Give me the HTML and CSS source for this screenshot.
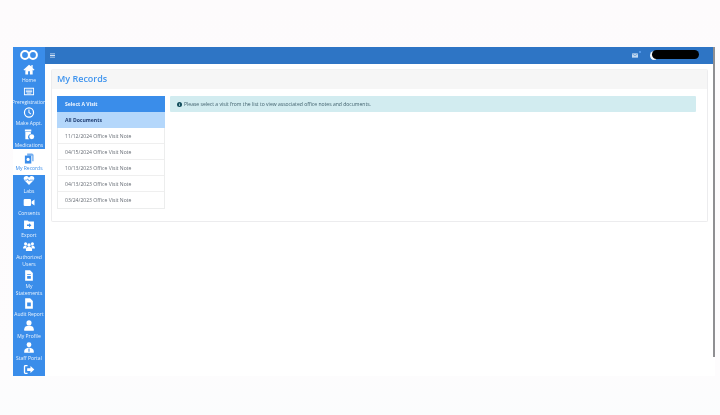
FILE: index.html
```html
<!DOCTYPE html>
<html lang="en">
<head>
<meta charset="utf-8">
<title>My Records</title>
<link rel="stylesheet" href="styles.css">
</head>
<body>
<div class="window">
  <nav class="sidebar">
    <div class="logo">
      <svg viewBox="0 0 18 12" width="18" height="12"><circle cx="5" cy="6" r="3.9" class="ring"/><circle cx="13" cy="6" r="3.9" class="ring"/></svg>
    </div>
    <a class="nav-item">
      <svg class="ico" viewBox="0 0 12 12"><path d="M6 .8 0 6.2l.9 1L2 6.2V11.4h3V8h2v3.4h3V6.2l1.1 1 .9-1-2-1.8V1.2H8.6v1.6z"/></svg>
      <span>Home</span>
    </a>
    <a class="nav-item">
      <svg class="ico" viewBox="0 0 12 12"><path fill-rule="evenodd" d="M.5 2h11v8H.5zM1.5 3v6h9V3z"/><path d="M2.5 4h7v1h-7zM2.5 5.7h7v1h-7zM3.5 7.4h5v.8h-5z"/></svg>
      <span class="wide">Preregistration</span>
    </a>
    <a class="nav-item">
      <svg class="ico" viewBox="0 0 12 12"><path fill-rule="evenodd" d="M6 .4a5.600 5.600 0 1 1 0 11.200A5.600 5.600 0 0 1 6 .4zm0 1.300a4.300 4.300 0 1 0 0 8.600 4.300 4.300 0 0 0 0-8.600z"/><path d="M5.400 2.800h1.100v3l2 1.500-.6.9-2.500-1.800z"/></svg>
      <span>Make Appt.</span>
    </a>
    <a class="nav-item">
      <svg class="ico" viewBox="0 0 12 12"><path d="M1.500.6h7v2h-7zM2 3.200h6v2.200a3.400 3.400 0 0 0-2 5.900H2z"/><circle cx="9" cy="8.400" r="2.700"/></svg>
      <span>Medications</span>
    </a>
    <a class="nav-item active">
      <svg class="ico" viewBox="0 0 12 12"><path d="M4 .5h5.500L11 2v7H9.500V3H4z" opacity=".7"/><path d="M1.500 2.800h7v8.700h-7z"/><circle cx="5" cy="7" r="1.700" fill="#fff"/></svg>
      <span>My Records</span>
    </a>
    <a class="nav-item">
      <svg class="ico" viewBox="0 0 12 12"><path d="M6 11 .9 5.800C-.6 4 .5 1.200 3 1.200c1.300 0 2.300.7 3 1.700.7-1 1.700-1.700 3-1.700 2.500 0 3.600 2.800 2.100 4.600z"/><path d="M1 5.600h2.600l1-1.400 1.500 2.500 1-1.100H11" class="cut"/></svg>
      <span>Labs</span>
    </a>
    <a class="nav-item">
      <svg class="ico" viewBox="0 0 12 12"><rect x=".2" y="2.200" width="8" height="7.600" rx="1.200"/><path d="m8.800 5 3.200-2.200v6.400L8.800 7z"/></svg>
      <span>Consents</span>
    </a>
    <a class="nav-item">
      <svg class="ico" viewBox="0 0 12 12"><path fill-rule="evenodd" d="M.6 1.600h4l1.200 1.200h5.600v8H.6zM6 4.600v1.500H3.800v1.600H6v1.500l2.600-2.300z"/></svg>
      <span>Export</span>
    </a>
    <a class="nav-item double">
      <svg class="ico" viewBox="0 0 14 12"><circle cx="3" cy="2.800" r="1.800"/><circle cx="11" cy="2.800" r="1.800"/><circle cx="7" cy="4.200" r="2"/><path d="M0 8.400c0-2 1-3.600 3-3.600.6 0 1 .1 1.400.4-.4.6-.6 1.800-.6 3.200zM14 8.400c0-2-1-3.600-3-3.600-.6 0-1 .1-1.400.4.4.6.6 1.800.6 3.200zM3.400 11.200V9.400c0-2 1.400-3 3.600-3s3.600 1 3.600 3v1.800z"/></svg>
      <span>Authorized<br>Users</span>
    </a>
    <a class="nav-item double">
      <svg class="ico" viewBox="0 0 12 12"><path fill-rule="evenodd" d="M1.800.4h5.400l3 3v8.200H1.800zM4 4.500v1h4v-1zM4 6.500v3h4v-3z"/></svg>
      <span>My<br>Statements</span>
    </a>
    <a class="nav-item">
      <svg class="ico" viewBox="0 0 12 12"><path fill-rule="evenodd" d="M1.800.4h5.400l3 3v8.200H1.800zM4 5v4h4V5z"/></svg>
      <span>Audit Report</span>
    </a>
    <a class="nav-item">
      <svg class="ico" viewBox="0 0 12 12"><circle cx="6" cy="3.200" r="2.800"/><path d="M.8 11.600V10c0-2.300 2-3.600 5.200-3.600s5.200 1.300 5.200 3.600v1.600z"/></svg>
      <span>My Profile</span>
    </a>
    <a class="nav-item">
      <svg class="ico" viewBox="0 0 12 12"><circle cx="6" cy="3" r="2.600"/><path fill-rule="evenodd" d="M.8 11.600V9.800C.8 7.600 3 6.200 6 6.200s5.200 1.400 5.200 3.600v1.800zM5.400 7v3.600h1.200V7z"/></svg>
      <span>Staff Portal</span>
    </a>
    <a class="nav-item logout">
      <svg class="ico" viewBox="0 0 12 12"><path d="M4.400 1H2C1 1 .4 1.600.4 2.600v6.800c0 1 .6 1.600 1.600 1.600h2.400V9.600H2.400a.6.6 0 0 1-.6-.6V3c0-.3.3-.6.6-.6h2z"/><path d="M7.600 2.200 11.800 6 7.600 9.800V7.500H4V4.500h3.600z"/></svg>
    </a>
  </nav>
  <div class="content">
    <header class="topbar">
      <svg class="menu" viewBox="0 0 6 6" width="5" height="5"><path d="M0 .6h6v1H0zM0 2.500h6v1H0zM0 4.400h6v1H0z"/></svg>
      <div class="topbar-right">
        <span class="mail">
          <svg viewBox="0 0 7 5" width="6" height="5"><path d="M0 0h7v5H0z"/><path d="m.4.6 3.100 2.200L6.600.6" class="mail-line"/></svg>
          <i class="mail-dot"></i>
        </span>
        <span class="avatar"><i class="redaction"></i></span>
      </div>
    </header>
    <main class="main">
      <section class="card">
        <h1 class="card-title">My Records</h1>
        <div class="card-body">
          <div class="visits">
            <div class="visit-head">Select A Visit</div>
            <div class="visit-all">All Documents</div>
            <div class="visit">11/12/2024 Office Visit Note</div>
            <div class="visit">04/15/2024 Office Visit Note</div>
            <div class="visit">10/13/2023 Office Visit Note</div>
            <div class="visit">04/13/2023 Office Visit Note</div>
            <div class="visit">03/24/2023 Office Visit Note</div>
          </div>
          <div class="detail">
            <div class="alert">
              <svg viewBox="0 0 6 6" width="5" height="5"><circle cx="3" cy="3" r="3"/><path d="M2.600 1.100h.8v.8h-.8zM2.600 2.500h.8v2.400h-.8z" class="info"/></svg>
              <span>Please select a visit from the list to view associated office notes and documents.</span>
            </div>
          </div>
        </div>
      </section>
    </main>
  </div>
  <div class="scrollbar"><i class="thumb"></i></div>
</div>
</body>
</html>
```
FILE: styles.css
```css
* { box-sizing: border-box; }
html, body { margin: 0; height: 100%; }
body {
  background: linear-gradient(#fdfbfc, #fdfcfd 90%, #fbfcfd);
  padding: 47px 5px 39px 13px;
  font-family: "Open Sans", "Liberation Sans", sans-serif;
  overflow: hidden;
}
.window {
  display: flex;
  height: 329px;
  background: #fff;
  filter: blur(0.45px);
}
.sidebar {
  width: 32px;
  flex: none;
  background: #3a8dea;
  display: flex;
  flex-direction: column;
  overflow: hidden;
}
.logo { height: 16.3px; flex: none; display: flex; justify-content: center; align-items: flex-start; padding-top: 2px; }
.ring { fill: none; stroke: #fff; stroke-width: 2; }
.nav-item {
  height: 21.7px;
  flex: none;
  display: flex;
  flex-direction: column;
  align-items: center;
  justify-content: flex-end;
  color: #e8f2fd;
  font-size: 5px;
  line-height: 7px;
  text-align: center;
  white-space: nowrap;
  padding-bottom: 1px;
}
.nav-item .ico { width: 12px; height: 11px; fill: #fff; margin-bottom: 2px; flex: none; }
.nav-item.double { height: 29px; }
.nav-item.active { height: 25.5px; margin-top: -1px; padding-bottom: 2.5px; background: #fff; color: #3a8dea; }
.nav-item.active .ico { fill: #3a8dea; margin-bottom: 1px; }
.nav-item.logout { height: 17px; padding-bottom: 5px; }
.nav-item.logout .ico { margin-bottom: 0; }
.wide { font-size: 4.9px; margin: 0 -2px; }
.cut { fill: none; stroke: #3a8dea; stroke-width: .8; }
.content { flex: 1; min-width: 0; display: flex; flex-direction: column; }
.topbar {
  height: 16.5px;
  flex: none;
  background: #2e75c5;
  display: flex;
  justify-content: space-between;
  align-items: center;
  padding: 0 14px 0 5px;
}
.menu { fill: #d5e4f5; }
.topbar-right { display: flex; align-items: center; gap: 12px; }
.mail { position: relative; display: flex; }
.mail svg { fill: #c2d9f1; }
.mail-line { fill: none; stroke: #2e75c5; stroke-width: .6; }
.mail-dot { position: absolute; top: -2px; right: -3px; width: 2px; height: 2px; background: #5fa3f5; border-radius: 50%; }
.avatar { width: 49px; height: 10px; position: relative; display: block; }
.avatar::before { content: ""; position: absolute; left: 0; top: 1px; width: 8px; height: 9px; border-radius: 50%; background: #f2f6fb; }
.redaction { position: absolute; left: 2px; top: 0; width: 47px; height: 9px; background: #000; border-radius: 4.5px; }
.main { flex: 1; padding: 5.5px 5px 0 6px; }
.card {
  background: #fff;
  border: 1px solid #ececee;
  border-top-color: #f3f3f3;
  border-radius: 2px;
  height: 153px;
  display: flex;
  flex-direction: column;
}
.card-title {
  margin: 0;
  height: 19px;
  flex: none;
  background: #f6f6f6;
  color: #3f94ee;
  font-size: 9px;
  font-weight: 600;
  line-height: 18px;
  padding-left: 5px;
}
.card-body { display: flex; gap: 5px; padding: 7px 11px 0 5px; }
.visits { width: 108px; flex: none; border: 1px solid #eceded; border-top: 0; font-size: 5.1px; }
.visit-head, .visit-all { height: 16px; line-height: 16px; padding-left: 8px; font-weight: 700; margin: 0 -1px; }
.visit-head { background: #3a8dea; color: #f0f6fe; }
.visit-all { background: #b4d7fb; color: #1f3e73; }
.visit { height: 16px; line-height: 17px; padding-left: 7px; color: #666c74; border-bottom: 1px solid #efefef; }
.visit:first-of-type { height: 17px; }
.visit:last-child { border-bottom: 0; }
.detail { flex: 1; }
.alert {
  height: 16px;
  background: #d2ecf0;
  border-radius: 1px;
  display: flex;
  align-items: center;
  gap: 2px;
  padding-left: 7px;
  color: #3f5f6b;
  font-size: 5.05px;
}
.alert svg { fill: #134e5c; flex: none; }
.info { fill: #d2ecf0; }
.scrollbar { width: 2px; flex: none; }
.thumb { display: block; height: 310px; background: #8f8f92; }
```
